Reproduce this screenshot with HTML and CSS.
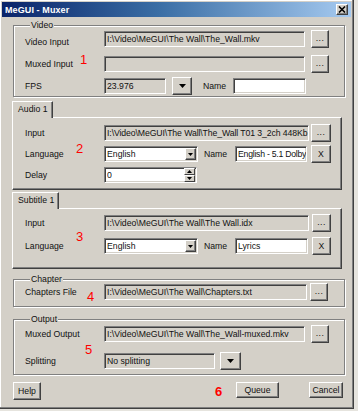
FILE: index.html
```html
<!DOCTYPE html>
<html>
<head>
<meta charset="utf-8">
<link rel="stylesheet" href="styles.css">
</head>
<body>
<div class="window">
  <div class="titlebar">
    <span class="title">MeGUI - Muxer</span>
    <span class="close"><svg width="8" height="7" viewBox="0 0 8 7"><path d="M1 0.5l6 6M7 0.5l-6 6" stroke="#000" stroke-width="1.6"/></svg></span>
  </div>
  <div class="content">
    <fieldset class="group video">
      <legend>Video</legend>
      <div class="row r-v1">
        <span class="lbl lbl-low">Video Input</span>
        <div class="tb ro w201">I:\Video\MeGUI\The Wall\The_Wall.mkv</div>
        <button class="btn dots g6 w18">...</button>
      </div>
      <div class="row r-v2">
        <span class="lbl">Muxed Input</span>
        <div class="tb ro w201"></div>
        <button class="btn dots g6 w18">...</button>
      </div>
      <div class="row r-v3">
        <span class="lbl">FPS</span>
        <div class="tb ro w62">23.976</div>
        <button class="btn drop g6 w20"><svg width="7" height="4" viewBox="0 0 7 4"><path d="M0 0h7L3.5 4z"/></svg></button>
        <span class="namelbl n11">Name</span>
        <div class="tb wh w73"></div>
      </div>
    </fieldset>

    <div class="tabs audio">
      <div class="tab t-audio">Audio 1</div>
      <div class="panel p-audio">
        <div class="row">
          <span class="lbl">Input</span>
          <div class="tb ro w205 tight">I:\Video\MeGUI\The Wall\The_Wall T01 3_2ch 448Kb</div>
          <button class="btn dots g2 w20">...</button>
        </div>
        <div class="row r-gap3">
          <span class="lbl">Language</span>
          <div class="select w94"><span class="val">English</span><span class="sbtn"><svg width="5" height="3" viewBox="0 0 5 3"><path d="M0 0h5L2.5 3z"/></svg></span></div>
          <span class="namelbl n6">Name</span>
          <div class="tb wh w72 tighter">English - 5.1 Dolby</div>
          <button class="btn g4 w20">X</button>
        </div>
        <div class="row r-gap3">
          <span class="lbl">Delay</span>
          <div class="spin w93"><span class="val">0</span><span class="spinbtns"><span class="sb"><svg width="5" height="3" viewBox="0 0 5 3"><path d="M0 3h5L2.5 0z"/></svg></span><span class="sb"><svg width="5" height="3" viewBox="0 0 5 3"><path d="M0 0h5L2.5 3z"/></svg></span></span></div>
        </div>
      </div>
    </div>

    <div class="tabs subtitle">
      <div class="tab t-sub">Subtitle 1</div>
      <div class="panel p-sub">
        <div class="row">
          <span class="lbl">Input</span>
          <div class="tb ro w205">I:\Video\MeGUI\The Wall\The Wall.idx</div>
          <button class="btn dots g3 w19">...</button>
        </div>
        <div class="row r-gap5">
          <span class="lbl">Language</span>
          <div class="select w94"><span class="val">English</span><span class="sbtn"><svg width="5" height="3" viewBox="0 0 5 3"><path d="M0 0h5L2.5 3z"/></svg></span></div>
          <span class="namelbl n6">Name</span>
          <div class="tb wh w73">Lyrics</div>
          <button class="btn g4 w19">X</button>
        </div>
      </div>
    </div>

    <fieldset class="group chapter">
      <legend>Chapter</legend>
      <div class="row r-c1">
        <span class="lbl">Chapters File</span>
        <div class="tb ro w203">I:\Video\MeGUI\The Wall\Chapters.txt</div>
        <button class="btn dots g3 w18">...</button>
      </div>
    </fieldset>

    <fieldset class="group output">
      <legend>Output</legend>
      <div class="row r-o1">
        <span class="lbl">Muxed Output</span>
        <div class="tb ro w201">I:\Video\MeGUI\The Wall\The_Wall-muxed.mkv</div>
        <button class="btn dots g6 w18">...</button>
      </div>
      <div class="row r-o2">
        <span class="lbl">Splitting</span>
        <div class="tb ro w111">No splitting</div>
        <button class="btn drop g5 w21"><svg width="7" height="4" viewBox="0 0 7 4"><path d="M0 0h7L3.5 4z"/></svg></button>
      </div>
    </fieldset>

    <div class="actions">
      <button class="btn help">Help</button>
      <span class="spacer"></span>
      <button class="btn queue">Queue</button>
      <button class="btn cancel">Cancel</button>
    </div>
  </div>

  <span class="num n1">1</span>
  <span class="num n2">2</span>
  <span class="num n3">3</span>
  <span class="num n4">4</span>
  <span class="num n5">5</span>
  <span class="num n6b">6</span>
</div>
</body>
</html>
```

FILE: styles.css
```css
* { box-sizing: border-box; }

html, body {
  margin: 0;
  padding: 0;
  background: #e6e4de;
}

body {
  font-family: "Liberation Sans", Arial, sans-serif;
  font-size: 8.7px;
  color: #111;
}

.window {
  position: relative;
  width: 354px;
  height: 409px;
  background: #d4d0c8;
  border-right: 1px solid #404040;
  border-bottom: 1px solid #404040;
  box-shadow: inset -1px -1px #808080, inset 1px 1px #ffffff;
  padding: 2px 2px 0 2px;
}

.titlebar {
  height: 15px;
  background: linear-gradient(to right, #0a246a 0%, #3a6ea5 45%, #a6caf0 100%);
  display: flex;
  align-items: center;
  justify-content: space-between;
  padding: 0 3px 0 3px;
}

.title {
  color: #fff;
  font-weight: bold;
  font-size: 9px;
  letter-spacing: 0.1px;
}

.close {
  width: 12px;
  height: 11px;
  background: #d4d0c8;
  border: 1px solid;
  border-color: #fff #404040 #404040 #fff;
  box-shadow: inset -1px -1px #808080;
  display: flex;
  align-items: center;
  justify-content: center;
}

.content {
  display: flex;
  flex-direction: column;
  padding-left: 10px;
}

/* group boxes */
.group {
  margin: 0 0 0 1px;
  width: 332px;
  border: 1px solid #808080;
  box-shadow: inset 1px 1px #fff, 1px 1px #fff;
  padding: 0 0 0 11px;
  min-width: 0;
}

.group legend {
  margin-left: 5px;
  padding: 0 1px;
  line-height: 10px;
  height: 10px;
  background: #d4d0c8;
}

.video { margin-top: 3px; padding-bottom: 1px; }
.chapter { margin-top: 5px; padding-bottom: 5px; }
.output { margin-top: 7px; padding-bottom: 4px; }

/* rows */
.row {
  display: flex;
  align-items: center;
  height: 18px;
}

.r-v2 { margin-top: 7px; }
.r-v3 { margin-top: 4px; }
.r-gap3 { margin-top: 3px; }
.r-gap5 { margin-top: 5px; }
.r-c1 { margin-top: -1px; }
.r-o1 { margin-top: 1px; }
.r-o2 { margin-top: 9px; }

.lbl {
  width: 79px;
  flex: none;
  white-space: nowrap;
}

.lbl-low { padding-top: 5px; }

.namelbl { flex: none; }
.n11 { margin-left: 11px; width: 30px; }
.n6 { margin-left: 6px; width: 31px; }

/* text boxes */
.tb, .select, .spin {
  height: 16px;
  flex: none;
  border: 1px solid;
  border-color: #808080 #fff #fff #808080;
  box-shadow: inset 1px 1px #404040, inset -1px -1px #d4d0c8;
  padding: 0 1px 0 2px;
  line-height: 14px;
  white-space: nowrap;
  overflow: hidden;
}

.tight { letter-spacing: -0.1px; }
.tighter { letter-spacing: -0.25px; }

.ro { background: #d4d0c8; }
.wh, .select, .spin { background: #fff; }

.select, .spin {
  display: flex;
  align-items: center;
  justify-content: space-between;
  padding-right: 1px;
}

.val { overflow: hidden; }

.sbtn {
  width: 11px;
  height: 12px;
  background: #d4d0c8;
  border: 1px solid;
  border-color: #fff #404040 #404040 #fff;
  box-shadow: inset -1px -1px #808080;
  display: flex;
  align-items: center;
  justify-content: center;
}

.spinbtns {
  display: flex;
  flex-direction: column;
  height: 14px;
  width: 11px;
}

.sb {
  flex: 1;
  background: #d4d0c8;
  border: 1px solid;
  border-color: #fff #404040 #404040 #fff;
  display: flex;
  align-items: center;
  justify-content: center;
}

.w201 { width: 201px; }
.w203 { width: 203px; }
.w205 { width: 205px; }
.w62 { width: 62px; }
.w72 { width: 72px; }
.w73 { width: 73px; }
.w93 { width: 93px; }
.w94 { width: 94px; }
.w111 { width: 111px; }

/* buttons */
.btn {
  font-family: "Liberation Sans", Arial, sans-serif;
  font-size: 8.7px;
  color: #111;
  height: 18px;
  flex: none;
  background: #d4d0c8;
  border: 1px solid;
  border-color: #fff #404040 #404040 #fff;
  box-shadow: inset -1px -1px #808080;
  padding: 0;
  margin: 0;
  display: flex;
  align-items: center;
  justify-content: center;
  line-height: 1;
}

.dots { letter-spacing: 0.5px; padding-bottom: 2px; }

.w18 { width: 18px; }
.w19 { width: 19px; }
.w20 { width: 20px; }
.w21 { width: 21px; }
.g2 { margin-left: 2px; }
.g3 { margin-left: 3px; }
.g4 { margin-left: 4px; }
.g5 { margin-left: 5px; }
.g6 { margin-left: 6px; }

/* tabs */
.tabs {
  display: flex;
  flex-direction: column;
  align-items: flex-start;
}

.audio { margin-top: 4px; }
.subtitle { margin-top: 2px; }

.tab {
  position: relative;
  z-index: 1;
  height: 17px;
  margin-bottom: -1px;
  background: #d4d0c8;
  border: 1px solid;
  border-bottom: none;
  border-color: #fff #404040 #404040 #fff;
  box-shadow: inset -1px 0 #808080;
  padding: 0 0 0 5px;
  line-height: 14px;
}

.t-audio { width: 41px; }
.t-sub { width: 47px; }

.panel {
  width: 330px;
  border: 1px solid;
  border-color: #fff #404040 #404040 #fff;
  box-shadow: inset -1px -1px #808080;
  padding-left: 12px;
}

.p-audio { height: 73px; padding-top: 6px; }
.p-sub { height: 61px; padding-top: 5px; }

/* bottom buttons */
.actions {
  display: flex;
  align-items: flex-start;
  margin-top: 7px;
  margin-left: 1px;
  width: 330px;
}

.spacer { flex: 1; }

.help { width: 28px; height: 18px; }
.queue { width: 43px; height: 16px; }
.cancel { width: 34px; height: 16px; margin-left: 30px; }

/* annotation numbers */
.num {
  position: absolute;
  color: #ff0000;
  font-size: 13px;
  line-height: 13px;
  font-family: "Liberation Sans", Arial, sans-serif;
}

.n1 { left: 80px; top: 53px; }
.n2 { left: 76px; top: 142px; }
.n3 { left: 76px; top: 230px; }
.n4 { left: 87px; top: 290px; }
.n5 { left: 85px; top: 343px; }
.n6b { left: 215px; top: 385px; font-weight: bold; }
```
